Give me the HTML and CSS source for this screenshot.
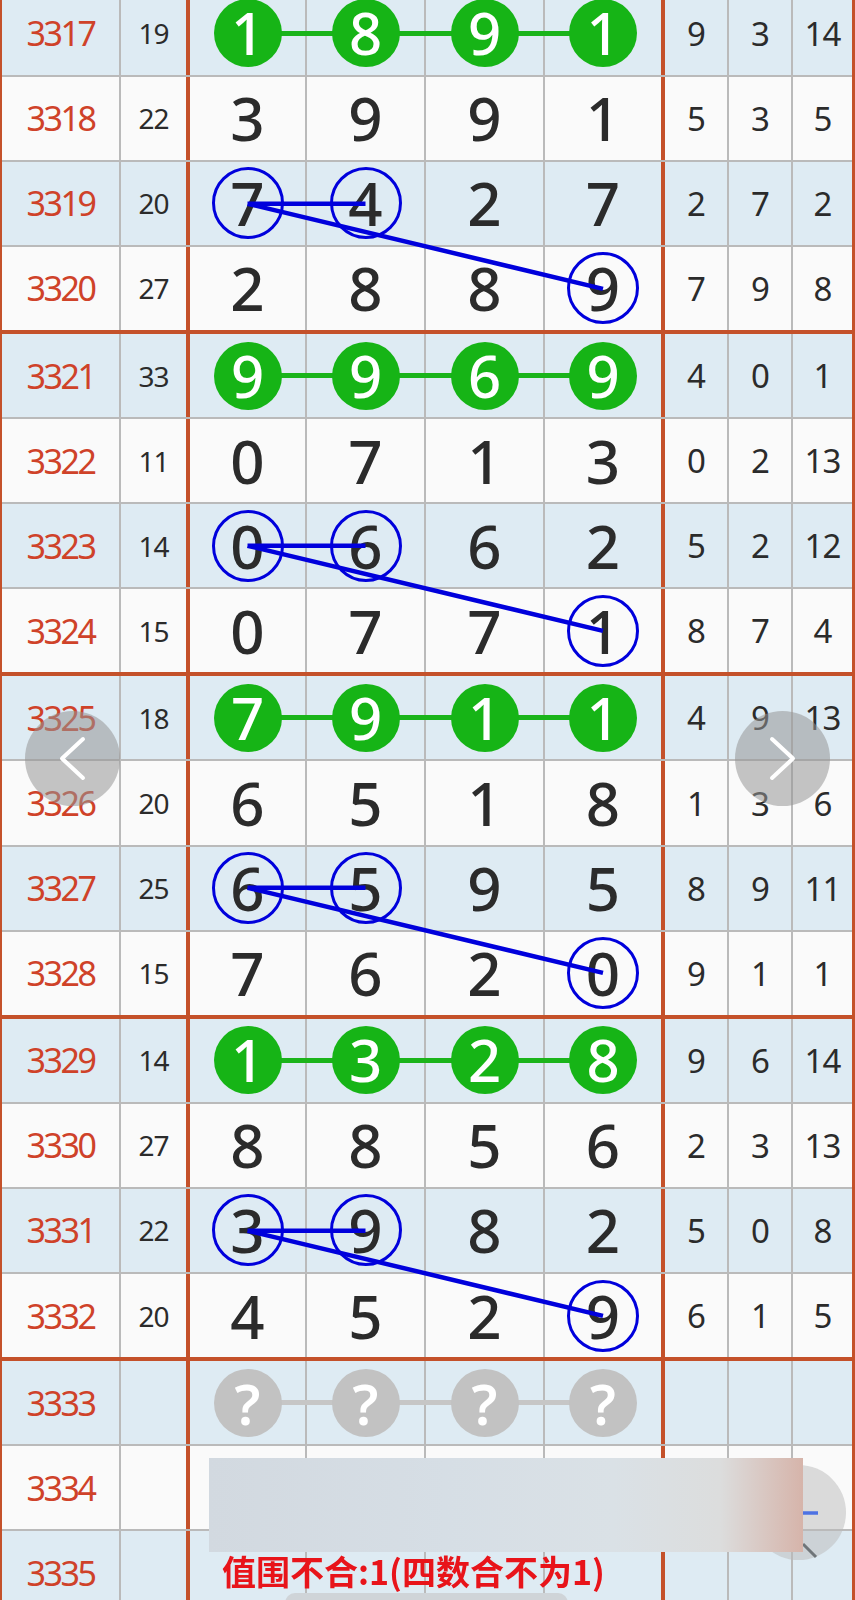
FILE: index.html
```html
<!DOCTYPE html>
<html lang="zh">

<head>
    <meta charset="UTF-8">
    <meta name="viewport" content="width=device-width, initial-scale=1.0">
    <title>走势图</title>
    <link rel="stylesheet" href="styles.css">
</head>

<body>
    <div class="board">
        <div class="block">
            <div class="row balls">
                <div class="pd">3317</div><div class="sm">19</div>
                <div class="dg"><span class="ball">1</span></div><div class="dg"><span class="ball">8</span></div><div class="dg"><span class="ball">9</span></div><div class="dg"><span class="ball">1</span></div>
                <div class="ct">9</div><div class="ct">3</div><div class="ct">14</div>
            </div>
            <div class="row">
                <div class="pd">3318</div><div class="sm">22</div>
                <div class="dg">3</div><div class="dg">9</div><div class="dg">9</div><div class="dg">1</div>
                <div class="ct">5</div><div class="ct">3</div><div class="ct">5</div>
            </div>
            <div class="row">
                <div class="pd">3319</div><div class="sm">20</div>
                <div class="dg"><span class="ring">7</span></div><div class="dg"><span class="ring">4</span></div><div class="dg">2</div><div class="dg">7</div>
                <div class="ct">2</div><div class="ct">7</div><div class="ct">2</div>
            </div>
            <div class="row">
                <div class="pd">3320</div><div class="sm">27</div>
                <div class="dg">2</div><div class="dg">8</div><div class="dg">8</div><div class="dg"><span class="ring">9</span></div>
                <div class="ct">7</div><div class="ct">9</div><div class="ct">8</div>
            </div>
            <svg class="links" viewBox="0 0 850 342.4"><path d="M245.5 211.75H363.5M245.5 211.75L601 296.85" /></svg>
        </div>

        <div class="block">
            <div class="row balls">
                <div class="pd">3321</div><div class="sm">33</div>
                <div class="dg"><span class="ball">9</span></div><div class="dg"><span class="ball">9</span></div><div class="dg"><span class="ball">6</span></div><div class="dg"><span class="ball">9</span></div>
                <div class="ct">4</div><div class="ct">0</div><div class="ct">1</div>
            </div>
            <div class="row">
                <div class="pd">3322</div><div class="sm">11</div>
                <div class="dg">0</div><div class="dg">7</div><div class="dg">1</div><div class="dg">3</div>
                <div class="ct">0</div><div class="ct">2</div><div class="ct">13</div>
            </div>
            <div class="row">
                <div class="pd">3323</div><div class="sm">14</div>
                <div class="dg"><span class="ring">0</span></div><div class="dg"><span class="ring">6</span></div><div class="dg">6</div><div class="dg">2</div>
                <div class="ct">5</div><div class="ct">2</div><div class="ct">12</div>
            </div>
            <div class="row">
                <div class="pd">3324</div><div class="sm">15</div>
                <div class="dg">0</div><div class="dg">7</div><div class="dg">7</div><div class="dg"><span class="ring">1</span></div>
                <div class="ct">8</div><div class="ct">7</div><div class="ct">4</div>
            </div>
            <svg class="links" viewBox="0 0 850 342.4"><path d="M245.5 211.75H363.5M245.5 211.75L601 296.85" /></svg>
        </div>

        <div class="block">
            <div class="row balls">
                <div class="pd">3325</div><div class="sm">18</div>
                <div class="dg"><span class="ball">7</span></div><div class="dg"><span class="ball">9</span></div><div class="dg"><span class="ball">1</span></div><div class="dg"><span class="ball">1</span></div>
                <div class="ct">4</div><div class="ct">9</div><div class="ct">13</div>
            </div>
            <div class="row">
                <div class="pd">3326</div><div class="sm">20</div>
                <div class="dg">6</div><div class="dg">5</div><div class="dg">1</div><div class="dg">8</div>
                <div class="ct">1</div><div class="ct">3</div><div class="ct">6</div>
            </div>
            <div class="row">
                <div class="pd">3327</div><div class="sm">25</div>
                <div class="dg"><span class="ring">6</span></div><div class="dg"><span class="ring">5</span></div><div class="dg">9</div><div class="dg">5</div>
                <div class="ct">8</div><div class="ct">9</div><div class="ct">11</div>
            </div>
            <div class="row">
                <div class="pd">3328</div><div class="sm">15</div>
                <div class="dg">7</div><div class="dg">6</div><div class="dg">2</div><div class="dg"><span class="ring">0</span></div>
                <div class="ct">9</div><div class="ct">1</div><div class="ct">1</div>
            </div>
            <svg class="links" viewBox="0 0 850 342.4"><path d="M245.5 211.75H363.5M245.5 211.75L601 296.85" /></svg>
        </div>

        <div class="block">
            <div class="row balls">
                <div class="pd">3329</div><div class="sm">14</div>
                <div class="dg"><span class="ball">1</span></div><div class="dg"><span class="ball">3</span></div><div class="dg"><span class="ball">2</span></div><div class="dg"><span class="ball">8</span></div>
                <div class="ct">9</div><div class="ct">6</div><div class="ct">14</div>
            </div>
            <div class="row">
                <div class="pd">3330</div><div class="sm">27</div>
                <div class="dg">8</div><div class="dg">8</div><div class="dg">5</div><div class="dg">6</div>
                <div class="ct">2</div><div class="ct">3</div><div class="ct">13</div>
            </div>
            <div class="row">
                <div class="pd">3331</div><div class="sm">22</div>
                <div class="dg"><span class="ring">3</span></div><div class="dg"><span class="ring">9</span></div><div class="dg">8</div><div class="dg">2</div>
                <div class="ct">5</div><div class="ct">0</div><div class="ct">8</div>
            </div>
            <div class="row">
                <div class="pd">3332</div><div class="sm">20</div>
                <div class="dg">4</div><div class="dg">5</div><div class="dg">2</div><div class="dg"><span class="ring">9</span></div>
                <div class="ct">6</div><div class="ct">1</div><div class="ct">5</div>
            </div>
            <svg class="links" viewBox="0 0 850 342.4"><path d="M245.5 211.75H363.5M245.5 211.75L601 296.85" /></svg>
        </div>

        <div class="block">
            <div class="row balls pending">
                <div class="pd">3333</div><div class="sm"></div>
                <div class="dg"><span class="ball">?</span></div><div class="dg"><span class="ball">?</span></div><div class="dg"><span class="ball">?</span></div><div class="dg"><span class="ball">?</span></div>
                <div class="ct"></div><div class="ct"></div><div class="ct"></div>
            </div>
            <div class="row">
                <div class="pd">3334</div><div class="sm"></div>
                <div class="dg"></div><div class="dg"></div><div class="dg"></div><div class="dg"></div>
                <div class="ct"></div><div class="ct"></div><div class="ct"></div>
            </div>
            <div class="row">
                <div class="pd">3335</div><div class="sm"></div>
                <div class="dg"></div><div class="dg"></div><div class="dg"></div><div class="dg"></div>
                <div class="ct"></div><div class="ct"></div><div class="ct"></div>
            </div>
        </div>
    </div>

    <!-- floating controls over the chart -->
    <div class="nav prev">
        <svg viewBox="0 0 95 95"><path d="M58 28L37 47.5L58 67" /></svg>
    </div>
    <div class="nav next">
        <svg viewBox="0 0 95 95"><path d="M37 28L58 47.5L37 67" /></svg>
    </div>

    <div class="zoom-btn">
        <svg viewBox="0 0 95 95">
            <path class="minus" d="M34 48H67" />
            <path class="handle" d="M52 79L65 92" />
        </svg>
    </div>
    <div class="ad-box"></div>
    <div class="hint">值围不合:1(四数合不为1)</div>
    <div class="toast"></div>
</body>

</html>
```

FILE: styles.css
```css
* {
    box-sizing: border-box;
}

body {
    margin: 0;
    background-color: #fafafa;
    font-family: "Noto Sans", "DejaVu Sans", sans-serif;
    color: #2b2b2b;
    overflow: hidden;
}

.board {
    width: 855px;
    margin-top: -8.4px;
    border-left: 2px solid #c4512a;
    border-right: 3px solid #c4512a;
}

.block {
    position: relative;
}

.row {
    display: grid;
    grid-template-columns: 119px 69px 117px 119px 119px 120px 64px 64px 59px;
    height: 85.1px;
    background-color: #fafafa;
    border-bottom: 2px solid #bababa;
}

.row:nth-child(odd) {
    background-color: #deebf3;
}

.row:nth-child(4) {
    height: 87.1px;
    border-bottom: 4px solid #c4512a;
}

.row > div {
    display: flex;
    align-items: center;
    justify-content: center;
    position: relative;
}

.row > :nth-child(1),
.row > :nth-child(3),
.row > :nth-child(4),
.row > :nth-child(5),
.row > :nth-child(7),
.row > :nth-child(8) {
    border-right: 2px solid #bababa;
}

.row > :nth-child(2),
.row > :nth-child(6) {
    border-right: 4px solid #c4512a;
}

.pd {
    color: #cf4229;
    font-size: 34px;
    letter-spacing: -2.5px;
}

.sm {
    font-size: 28px;
    letter-spacing: -1px;
}

.dg {
    font-size: 60px;
    font-weight: 500;
}

.ct {
    font-size: 33px;
    letter-spacing: -1px;
}

.ball {
    position: relative;
    z-index: 1;
    display: flex;
    align-items: center;
    justify-content: center;
    width: 68px;
    height: 68px;
    border-radius: 50%;
    background-color: #16b416;
    color: #fff;
    font-size: 58px;
    line-height: 1;
}

.balls .dg::before {
    content: "";
    position: absolute;
    left: 0;
    right: -2px;
    top: 50%;
    height: 5px;
    margin-top: -2.5px;
    background-color: #1ab41a;
}

.balls .dg:nth-child(3)::before {
    left: 50%;
}

.balls .dg:nth-child(6)::before {
    right: 50%;
}

.pending .ball {
    background-color: #c2c2c2;
    font-size: 56px;
    font-weight: 600;
}

.pending .dg::before {
    background-color: #c6c6c6;
}

.ring {
    display: flex;
    align-items: center;
    justify-content: center;
    width: 72px;
    height: 72px;
    border: 3.5px solid #0000dc;
    border-radius: 50%;
    line-height: 1;
}

.links {
    position: absolute;
    left: 0;
    top: 0;
    width: 100%;
    height: 100%;
    pointer-events: none;
}

.links path {
    fill: none;
    stroke: #0000dc;
    stroke-width: 4.5;
}

.nav {
    position: fixed;
    top: 710.5px;
    width: 95px;
    height: 95px;
    border-radius: 50%;
    background-color: rgba(150, 150, 150, 0.55);
}

.nav.prev {
    left: 25px;
}

.nav.next {
    left: 735px;
}

.nav svg,
.zoom-btn svg {
    display: block;
    width: 100%;
    height: 100%;
    overflow: visible;
}

.nav path {
    fill: none;
    stroke: #fff;
    stroke-width: 4;
    stroke-linecap: round;
    stroke-linejoin: round;
}

.zoom-btn {
    position: fixed;
    left: 751px;
    top: 1465px;
    width: 95px;
    height: 95px;
    border-radius: 50%;
    background-color: rgba(185, 185, 185, 0.5);
}

.zoom-btn .minus {
    stroke: #4d72e3;
    stroke-width: 3.5;
}

.zoom-btn .handle {
    stroke: #6f7579;
    stroke-width: 3;
}

.ad-box {
    position: fixed;
    left: 209px;
    top: 1457.5px;
    width: 594px;
    height: 94.5px;
    background: linear-gradient(90deg, #d2d9e0 0%, #d6dee5 40%, #dae1e6 68%, #dcdddd 86%, #d6b4aa 100%);
}

.hint {
    position: fixed;
    left: 222px;
    top: 1554px;
    color: #e8141a;
    font-family: "Noto Sans CJK SC", "Noto Sans", sans-serif;
    font-size: 34px;
    font-weight: bold;
    line-height: 1;
    white-space: nowrap;
}

.toast {
    position: fixed;
    left: 285px;
    top: 1593px;
    width: 283px;
    height: 30px;
    border-radius: 10px;
    background-color: #cfd4d8;
}
```
